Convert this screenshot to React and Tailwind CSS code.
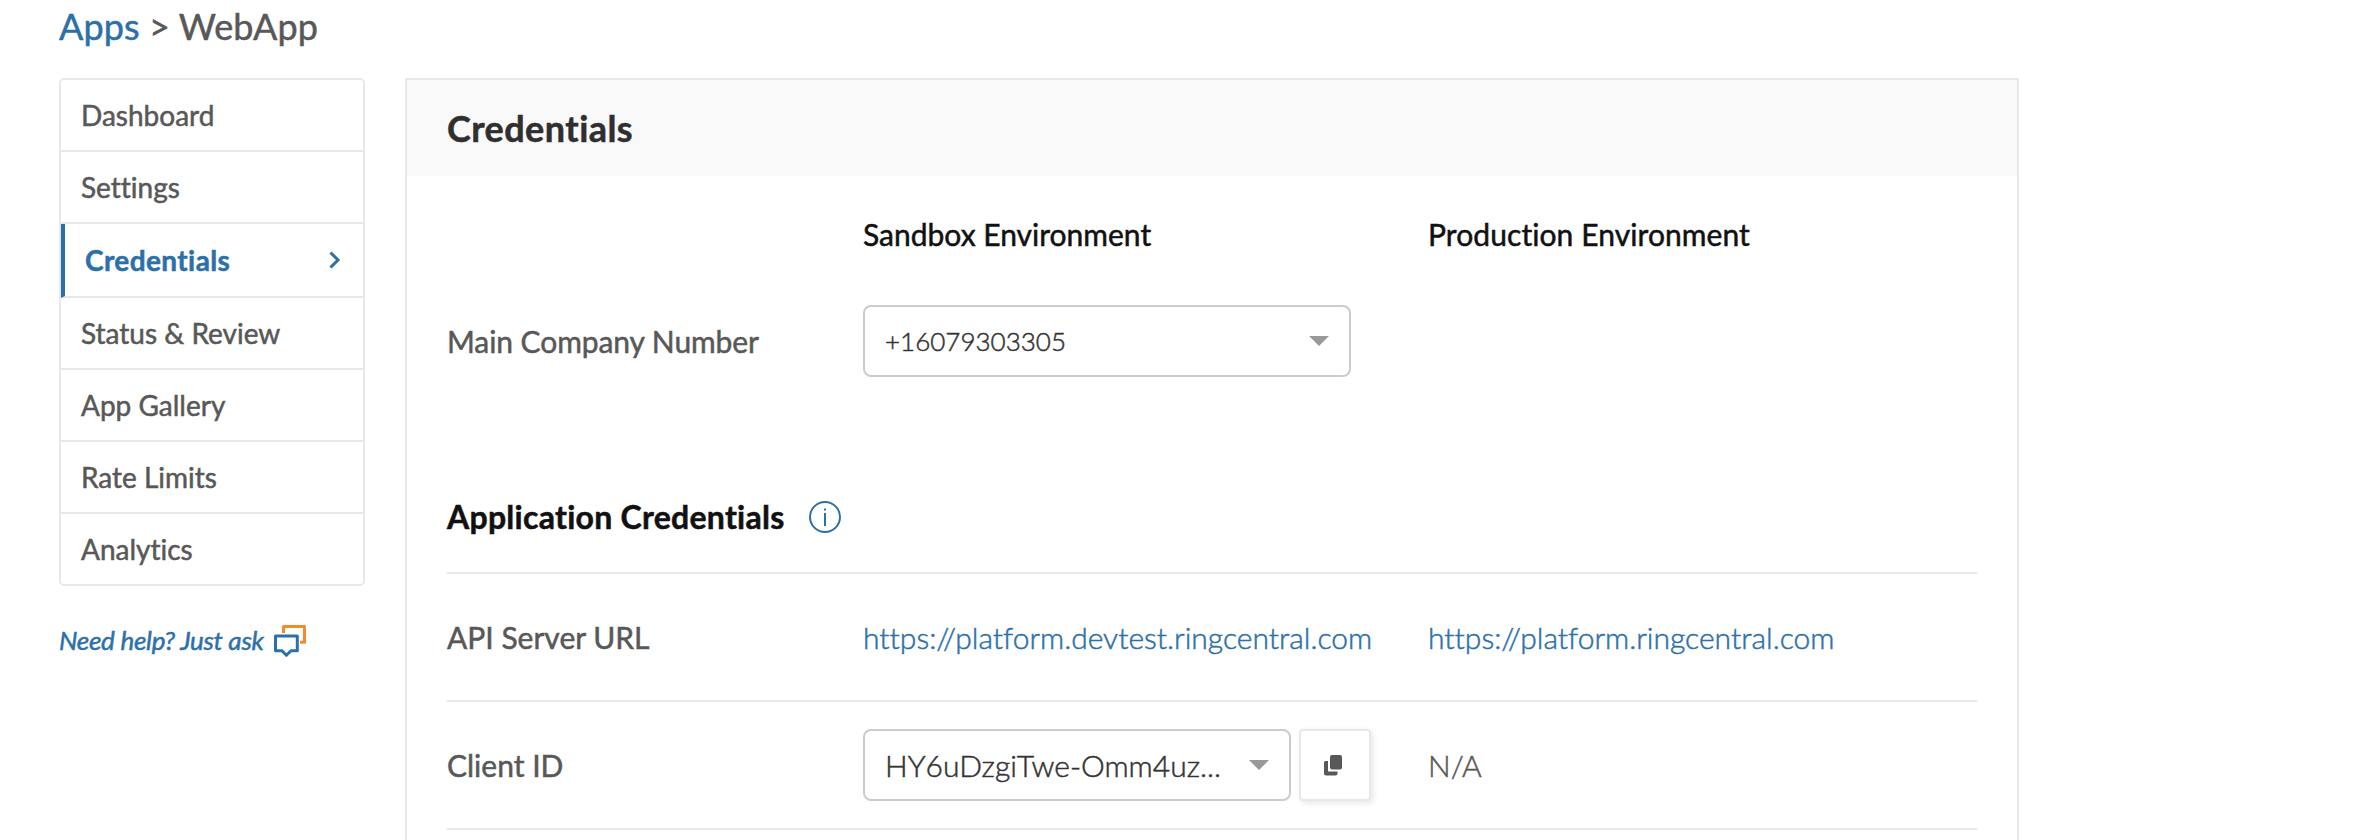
const items = ['Dashboard', 'Settings', 'Credentials', 'Status & Review', 'App Gallery', 'Rate Limits', 'Analytics'];

function Caret() {
  return (
    <svg width="20" height="10" viewBox="0 0 20 10">
      <path d="M0 0H20L10 10Z" fill="#999" />
    </svg>
  );
}

function Sidebar() {
  return (
    <nav className="w-[306px] rounded-[5px] border-2 border-[#e8e8e8]">
      {items.map((item) =>
        item === 'Credentials' ? (
          <div key={item} className="flex h-[74px] items-center justify-between border-b-2 border-l-4 border-b-[#e8e8e8] border-l-[#2c70aa] pr-[22px] pl-[20px] text-[28px] leading-[34px] font-bold tracking-[0.4px] text-[#2c70aa]">
            <span>{item}</span>
            <svg width="12" height="18" viewBox="0 0 12 18" fill="none" stroke="#2c70aa" strokeWidth="3">
              <path d="M1.5 1.5L9 9L1.5 16.5" />
            </svg>
          </div>
        ) : (
          <div key={item} className="flex h-[72px] items-center border-b-2 border-[#e8e8e8] pl-[20px] text-[28px] leading-[34px] text-[#585858] last:h-[70px] last:border-b-0">
            {item}
          </div>
        ),
      )}
    </nav>
  );
}

export default function App() {
  return (
    <div className="h-[840px] w-[2380px] overflow-hidden bg-white pl-[59px] font-['Lato',sans-serif] [font-variant-ligatures:none] [-webkit-text-stroke:0.5px_currentColor]">
      <header className="flex h-[78px] items-start pt-1 text-[36px] leading-[44px] tracking-[0.1px] text-[#585858]">
        <span className="whitespace-pre"><a className="text-[#2c70aa]">Apps</a> &gt; WebApp</span>
      </header>
      <div className="flex items-start gap-[40px]">
        <aside>
          <Sidebar />
          <a className="mt-[38px] flex items-center gap-[10px] text-[26px] leading-[32px] tracking-[-0.27px] text-[#2c70aa] italic">
            <span className="pb-0.5">Need help? Just ask</span>
            <svg width="33" height="32" viewBox="0 0 33 32" fill="none" strokeWidth="3" strokeLinejoin="round">
              <path d="M9.500 8V1.500H30.500V17.200H26" stroke="#f38b2c" />
              <path d="M1.500 11H23.300V25.800H17L12.400 30.300L8 25.800H1.500Z" stroke="#2c70aa" />
            </svg>
          </a>
        </aside>
        <main className="h-[780px] w-[1614px] border-2 border-[#e8e8e8]">
          <h1 className="flex h-24 items-center bg-[#f9f9f9] pl-10 text-[36px] leading-[44px] font-bold tracking-[0.45px] text-[#2f2f2f]">Credentials</h1>
          <div className="px-10">
            <div className="grid h-[129px] grid-cols-[416px_565px_1fr] items-start pt-10 text-[30px] leading-[36px] text-[#111]">
              <span />
              <span>Sandbox Environment</span>
              <span className="tracking-[0.08px]">Production Environment</span>
            </div>
            <div className="grid h-[72px] grid-cols-[416px_565px_1fr] items-center text-[30px] leading-[36px] text-[#585858]">
              <span className="tracking-[-0.08px]">Main Company Number</span>
              <div className="flex h-[72px] w-[488px] items-center justify-between rounded-[8px] border-2 border-[#ccc] pr-5 pl-[20px] text-[26px] font-light text-[#333]">
                <span>+16079303305</span>
                <Caret />
              </div>
            </div>
            <h2 className="flex h-[197px] items-start gap-6 border-b-2 border-[#e8e8e8] pt-[120px] text-[32px] leading-[39px] font-bold tracking-[0.27px] text-[#111]">
              Application Credentials
              <svg className="mt-1" width="32" height="32" viewBox="0 0 32 32" fill="none" stroke="#2c70aa" strokeWidth="2">
                <circle cx="16" cy="16" r="15" />
                <path d="M16 12V25M16 7.500V9.500" />
              </svg>
            </h2>
            <div className="grid h-[128px] grid-cols-[416px_565px_1fr] items-center border-b-2 border-[#e8e8e8] text-[30px] leading-[36px] text-[#585858]">
              <span>API Server URL</span>
              <a className="font-light text-[#2c70aa]">https://platform.devtest.ringcentral.com</a>
              <a className="font-light text-[#2c70aa]">https://platform.ringcentral.com</a>
            </div>
            <div className="grid h-[128px] grid-cols-[416px_565px_1fr] items-center border-b-2 border-[#e8e8e8] text-[30px] leading-[36px] text-[#585858]">
              <span>Client ID</span>
              <div className="flex gap-2">
                <div className="flex h-[72px] w-[428px] items-center justify-between rounded-[8px] border-2 border-[#ccc] pr-5 pl-[20px] font-light text-[#333]">
                  <span>HY6uDzgiTwe-Omm4uz...</span>
                  <Caret />
                </div>
                <button className="flex size-[72px] items-center justify-center rounded-[4px] border-2 border-[#e8e8e8] bg-white pt-px pr-1 shadow-[2px_2px_6px_rgba(0,0,0,0.1)]">
                  <svg width="18" height="21" viewBox="0 0 18 21" fill="#585858">
                    <rect x="6" y="0" width="12" height="14.500" rx="2" />
                    <path d="M1.500 6H4V16.500H13.500V18.500Q13.500 20.500 11.500 20.500H2Q0 20.500 0 18.500V7.500Q0 6 1.500 6Z" />
                  </svg>
                </button>
              </div>
              <span className="font-light">N/A</span>
            </div>
          </div>
        </main>
      </div>
    </div>
  );
}
